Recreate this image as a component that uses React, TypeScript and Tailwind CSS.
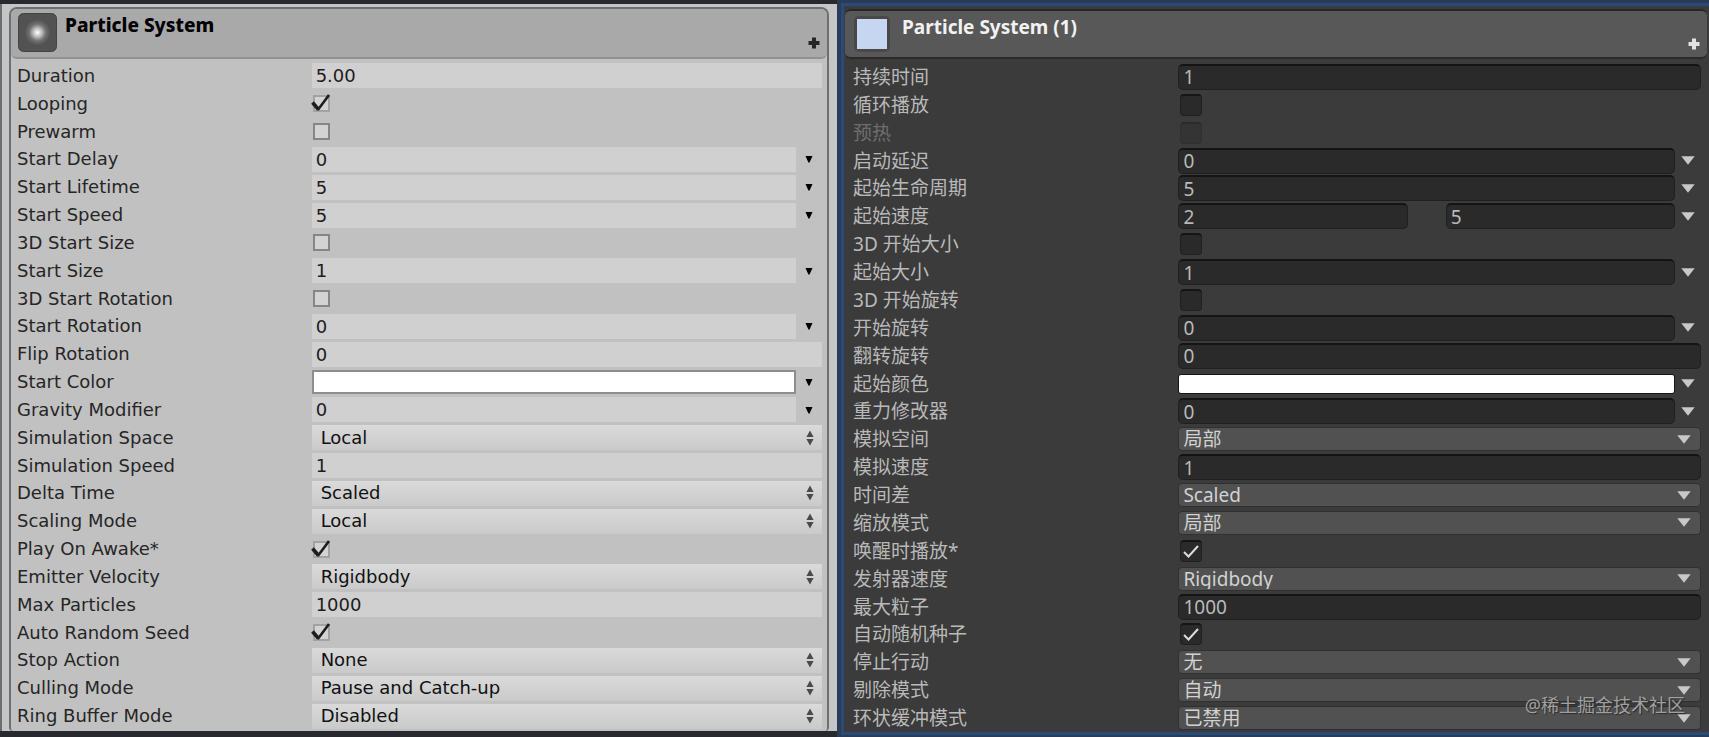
import { useId } from 'react';

type Theme = 'light' | 'dark';

type Row = {
  label: string;
  kind: 'text' | 'check' | 'curve' | 'range' | 'color' | 'select';
  value?: string;
  max?: string;
  checked?: boolean;
  disabled?: boolean;
};

const lightRows: Row[] = [
  { label: 'Duration', kind: 'text', value: '5.00' },
  { label: 'Looping', kind: 'check', checked: true },
  { label: 'Prewarm', kind: 'check' },
  { label: 'Start Delay', kind: 'curve', value: '0' },
  { label: 'Start Lifetime', kind: 'curve', value: '5' },
  { label: 'Start Speed', kind: 'curve', value: '5' },
  { label: '3D Start Size', kind: 'check' },
  { label: 'Start Size', kind: 'curve', value: '1' },
  { label: '3D Start Rotation', kind: 'check' },
  { label: 'Start Rotation', kind: 'curve', value: '0' },
  { label: 'Flip Rotation', kind: 'text', value: '0' },
  { label: 'Start Color', kind: 'color', value: '#ffffff' },
  { label: 'Gravity Modifier', kind: 'curve', value: '0' },
  { label: 'Simulation Space', kind: 'select', value: 'Local' },
  { label: 'Simulation Speed', kind: 'text', value: '1' },
  { label: 'Delta Time', kind: 'select', value: 'Scaled' },
  { label: 'Scaling Mode', kind: 'select', value: 'Local' },
  { label: 'Play On Awake*', kind: 'check', checked: true },
  { label: 'Emitter Velocity', kind: 'select', value: 'Rigidbody' },
  { label: 'Max Particles', kind: 'text', value: '1000' },
  { label: 'Auto Random Seed', kind: 'check', checked: true },
  { label: 'Stop Action', kind: 'select', value: 'None' },
  { label: 'Culling Mode', kind: 'select', value: 'Pause and Catch-up' },
  { label: 'Ring Buffer Mode', kind: 'select', value: 'Disabled' },
];

const darkRows: Row[] = [
  { label: '持续时间', kind: 'text', value: '1' },
  { label: '循环播放', kind: 'check' },
  { label: '预热', kind: 'check', disabled: true },
  { label: '启动延迟', kind: 'curve', value: '0' },
  { label: '起始生命周期', kind: 'curve', value: '5' },
  { label: '起始速度', kind: 'range', value: '2', max: '5' },
  { label: '3D 开始大小', kind: 'check' },
  { label: '起始大小', kind: 'curve', value: '1' },
  { label: '3D 开始旋转', kind: 'check' },
  { label: '开始旋转', kind: 'curve', value: '0' },
  { label: '翻转旋转', kind: 'text', value: '0' },
  { label: '起始颜色', kind: 'color', value: '#ffffff' },
  { label: '重力修改器', kind: 'curve', value: '0' },
  { label: '模拟空间', kind: 'select', value: '局部' },
  { label: '模拟速度', kind: 'text', value: '1' },
  { label: '时间差', kind: 'select', value: 'Scaled' },
  { label: '缩放模式', kind: 'select', value: '局部' },
  { label: '唤醒时播放*', kind: 'check', checked: true },
  { label: '发射器速度', kind: 'select', value: 'Rigidbody' },
  { label: '最大粒子', kind: 'text', value: '1000' },
  { label: '自动随机种子', kind: 'check', checked: true },
  { label: '停止行动', kind: 'select', value: '无' },
  { label: '剔除模式', kind: 'select', value: '自动' },
  { label: '环状缓冲模式', kind: 'select', value: '已禁用' },
];

const styles = {
  light: {
    row: 'grid grid-cols-[295fr_511fr] items-center pl-[6px] pr-[5px]',
    label: 'text-[18px] leading-6 text-[#262626] whitespace-nowrap',
    input:
      'h-[25px] w-full min-w-0 flex-1 bg-[#d0d0d0] px-1 text-[18px] leading-6 text-[#1c1c1c] outline-none',
    select:
      'h-[25px] w-full appearance-none bg-linear-to-b from-[#dadada] to-[#cacaca] pl-[9px] pr-6 text-[18px] leading-6 text-[#111111] outline-none',
    color:
      'block h-6 w-full min-w-0 flex-1 appearance-none border-2 border-[#8e8e8e] bg-white p-0 [&::-webkit-color-swatch]:border-0 [&::-webkit-color-swatch-wrapper]:p-0',
    checkWrap: 'relative ml-px flex size-[17px]',
    check: 'peer size-[17px] appearance-none border-2 border-[#868686] bg-[#d3d3d3] checked:border-[#a2a2a2]',
    menu: 'flex h-6 w-[26px] shrink-0 items-center justify-center text-black',
  },
  dark: {
    row: 'grid grid-cols-[325fr_522fr] items-center pl-2 pr-2',
    label: 'text-[19px] leading-6 text-[#b9b9b9] whitespace-nowrap',
    input:
      'h-[26px] w-full min-w-0 flex-1 rounded-[5px] border border-t-2 border-[#202020] border-t-[#141414] bg-[#2a2a2a] px-1 text-[19px] leading-5 text-[#b9b9b9] outline-none',
    select:
      'h-6 w-full appearance-none rounded-[4px] border border-[#303030] bg-[#515151] pl-1 pr-8 text-[19px] leading-5 text-[#d2d2d2] outline-none',
    color:
      'block h-5 w-full min-w-0 flex-1 appearance-none rounded-[3px] border border-[#161616] bg-white p-0 [&::-webkit-color-swatch]:border-0 [&::-webkit-color-swatch-wrapper]:p-0',
    checkWrap: 'relative ml-[2px] flex size-[22px]',
    check:
      'peer size-[22px] appearance-none rounded-[4px] border border-t-2 border-[#202020] border-t-[#151515] bg-[#2a2a2a] disabled:opacity-40',
    menu: 'flex h-6 w-[26px] shrink-0 items-center justify-center text-[#c8c8c8]',
  },
};

function DownArrow({ theme }: { theme: Theme }) {
  return theme === 'light' ? (
    <svg width="8" height="8" viewBox="0 0 8 8" fill="currentColor">
      <path d="M0.5 1h7L4.6 7.5H3.4z" />
    </svg>
  ) : (
    <svg width="14" height="9" viewBox="0 0 14 9" fill="currentColor">
      <path d="M0.3 0.3h13.4L7 8.8z" />
    </svg>
  );
}

function UpDownArrow() {
  return (
    <svg width="8" height="16" viewBox="0 0 8 16" fill="#4a4a4a">
      <path d="M4 0.5L7.6 7H0.4zM4 15.5L0.4 9h7.2z" />
    </svg>
  );
}

function CheckMark({ theme }: { theme: Theme }) {
  return theme === 'light' ? (
    <svg
      className="pointer-events-none absolute -left-0.5 -top-0.5 hidden peer-checked:block"
      width="20"
      height="19"
      viewBox="0 0 20 19"
      fill="none"
      stroke="#1d1d1d"
    >
      <path d="M1.5 9.5L7.5 16.5" strokeWidth="3.6" />
      <path d="M6.8 17L18 2" strokeWidth="2.6" />
    </svg>
  ) : (
    <svg
      className="pointer-events-none absolute left-0.5 top-0.5 hidden peer-checked:block"
      width="18"
      height="18"
      viewBox="0 0 18 18"
      fill="none"
      stroke="#dcdcdc"
      strokeWidth="2"
    >
      <path d="M2 10L6.5 14.5L16 4" />
    </svg>
  );
}

function Property({ row, theme }: { row: Row; theme: Theme }) {
  const id = useId();
  const s = styles[theme];
  const menu = (
    <button type="button" aria-label={row.label} className={s.menu}>
      <DownArrow theme={theme} />
    </button>
  );
  return (
    <div className={s.row}>
      <label htmlFor={id} className={row.disabled ? `${s.label} opacity-40` : s.label}>
        {row.label}
      </label>
      {row.kind === 'text' && <input id={id} type="text" defaultValue={row.value} className={s.input} />}
      {row.kind === 'curve' && (
        <div className="flex items-center">
          <input id={id} type="text" defaultValue={row.value} className={s.input} />
          {menu}
        </div>
      )}
      {row.kind === 'range' && (
        <div className="flex items-center">
          <div className="flex min-w-0 flex-1 gap-[38px]">
            <input id={id} type="text" defaultValue={row.value} className={s.input} />
            <input type="text" aria-label={row.label} defaultValue={row.max} className={s.input} />
          </div>
          {menu}
        </div>
      )}
      {row.kind === 'color' && (
        <div className="flex items-center">
          <input id={id} type="color" defaultValue={row.value} className={s.color} />
          {menu}
        </div>
      )}
      {row.kind === 'check' && (
        <div className={s.checkWrap}>
          <input
            id={id}
            type="checkbox"
            defaultChecked={row.checked}
            disabled={row.disabled}
            className={s.check}
          />
          <CheckMark theme={theme} />
        </div>
      )}
      {row.kind === 'select' && (
        <div className="relative flex items-center">
          <select id={id} className={s.select}>
            <option>{row.value}</option>
          </select>
          <span
            className={
              theme === 'light'
                ? 'pointer-events-none absolute right-2'
                : 'pointer-events-none absolute right-[10px] text-[#c8c8c8]'
            }
          >
            {theme === 'light' ? <UpDownArrow /> : <DownArrow theme="dark" />}
          </span>
        </div>
      )}
    </div>
  );
}

function PlusIcon() {
  return (
    <svg width="12" height="12" viewBox="0 0 12 12" stroke="currentColor" strokeWidth="4">
      <path d="M6 0.5v11M0.5 6h11" />
    </svg>
  );
}

function LightInspector() {
  return (
    <section className="flex min-w-0 flex-[839] flex-col bg-[#28292e] pb-1.5 pt-1 font-['DejaVu_Sans',sans-serif]">
      <div className="flex flex-1 flex-col border-l-2 border-[#6e6e6e] bg-[#c3c5c6] pl-[7px] pr-2 pt-[3px]">
        <div className="flex flex-1 flex-col rounded-b-[4px] rounded-t-lg border-2 border-b-0 border-[#6f6f6f] bg-[#c1c1c1]">
          <header className="flex h-[50px] items-start rounded-b-md rounded-t-md border-b-2 border-[#919191] bg-[#a9a9a9] pl-[7px] pr-[7px] pt-1">
            <svg width="39" height="39" viewBox="0 0 39 39">
              <defs>
                <radialGradient id="particle-glow">
                  <stop offset="0" stopColor="#ffffff" />
                  <stop offset="0.3" stopColor="#c4c4c4" />
                  <stop offset="0.65" stopColor="#707070" />
                  <stop offset="1" stopColor="#525252" />
                </radialGradient>
              </defs>
              <rect x="0.5" y="0.5" width="38" height="38" rx="5" fill="#525252" stroke="#444444" />
              <circle cx="19.5" cy="19.5" r="13" fill="url(#particle-glow)" />
            </svg>
            <h2 className="ml-2 flex-1 font-['Noto_Sans',sans-serif] text-[19px] font-extrabold leading-6 text-black">
              Particle System
            </h2>
            <button type="button" aria-label="Add" className="mt-6 text-[#262626]">
              <PlusIcon />
            </button>
          </header>
          <div className="grid flex-1 auto-rows-fr pb-px pt-[3px]">
            {lightRows.map((row) => (
              <Property key={row.label} row={row} theme="light" />
            ))}
          </div>
        </div>
      </div>
    </section>
  );
}

function DarkInspector() {
  return (
    <section className="flex min-w-0 flex-[870] flex-col border-b-2 border-l-4 border-t-[3px] border-[#2b3b55] font-['Noto_Sans','Noto_Sans_CJK_SC',sans-serif]">
      <div className="flex flex-1 flex-col border-b-[3px] border-l-[3px] border-t-[3px] border-[#284b78] bg-[#3b3b3b] pl-px pt-[3px]">
        <header className="mr-0.5 flex h-[50px] items-start rounded-md border-b-2 border-t-2 border-b-[#2b2b2b] border-t-[#262626] bg-[#585858] pl-[9px] pr-[7px] pt-[5px]">
          <span className="flex size-[36px] items-center justify-center rounded-[5px] bg-[#484848]">
            <span className="size-[30px] bg-[#c6d6f0]" />
          </span>
          <h2 className="ml-3 flex-1 text-[19px] font-bold leading-[22px] text-[#f2f2f2]">Particle System (1)</h2>
          <button type="button" aria-label="Add" className="mt-[22px] text-[#e2e2e2]">
            <PlusIcon />
          </button>
        </header>
        <div className="grid flex-1 auto-rows-fr pt-1">
          {darkRows.map((row) => (
            <Property key={row.label} row={row} theme="dark" />
          ))}
        </div>
      </div>
    </section>
  );
}

export default function App() {
  return (
    <main className="relative flex min-h-screen">
      <LightInspector />
      <DarkInspector />
      <p className="pointer-events-none absolute bottom-5 right-6 font-['Noto_Sans','Noto_Sans_CJK_SC',sans-serif] text-[18px] leading-6 text-[#a0a0a0] [text-shadow:1px_1px_1px_#2a2a2a]">
        @稀土掘金技术社区
      </p>
    </main>
  );
}
